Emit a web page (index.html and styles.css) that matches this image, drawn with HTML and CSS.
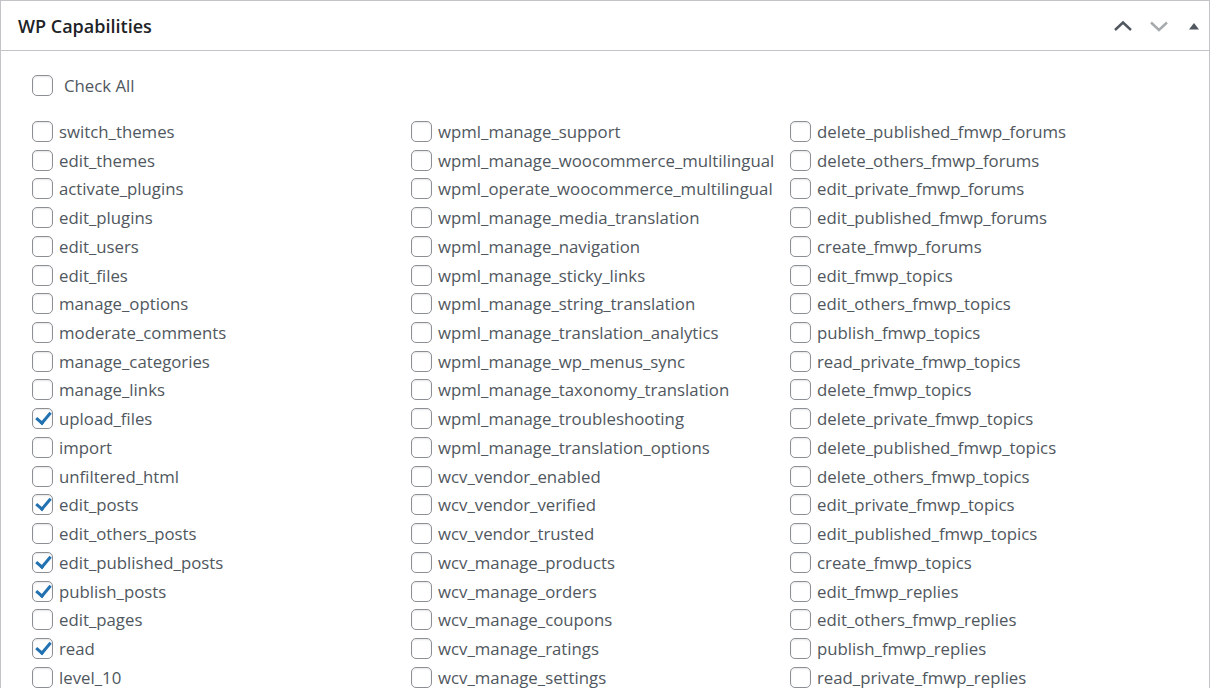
FILE: index.html
```html
<!DOCTYPE html>
<html lang="en">
<head>
<meta charset="utf-8">
<title>WP Capabilities</title>
<link rel="stylesheet" href="styles.css">
</head>
<body>
<div class="postbox">
  <div class="postbox-header">
    <h2 class="hndle">WP Capabilities</h2>
    <div class="handle-actions">
      <button class="handle-btn" type="button" aria-label="Move up">
        <svg width="20" height="20" viewBox="0 0 20 20"><path d="M2 14 L10 6.5 L18 14" fill="none" stroke="#50575e" stroke-width="2.4"/></svg>
      </button>
      <button class="handle-btn" type="button" aria-label="Move down">
        <svg width="20" height="20" viewBox="0 0 20 20"><path d="M2 6.5 L10 14 L18 6.5" fill="none" stroke="#a7aaad" stroke-width="2.4"/></svg>
      </button>
      <button class="handle-btn toggle" type="button" aria-label="Toggle panel">
        <svg width="12" height="10" viewBox="0 0 12 10"><path d="M1 8.5 L6 2 L11 8.5 Z" fill="#50575e"/></svg>
      </button>
    </div>
  </div>
  <div class="inside">
    <label class="check-all"><span class="cb"></span><span class="lbl">Check All</span></label>
    <div class="caps" id="caps"></div>
  </div>
</div>
<script src="app.js"></script>
</body>
</html>
```
FILE: app.js
```js
// Capability lists, one per column, with their checked state.
const columns = [
  [
    ["switch_themes", 0], ["edit_themes", 0], ["activate_plugins", 0], ["edit_plugins", 0],
    ["edit_users", 0], ["edit_files", 0], ["manage_options", 0], ["moderate_comments", 0],
    ["manage_categories", 0], ["manage_links", 0], ["upload_files", 1], ["import", 0],
    ["unfiltered_html", 0], ["edit_posts", 1], ["edit_others_posts", 0], ["edit_published_posts", 1],
    ["publish_posts", 1], ["edit_pages", 0], ["read", 1], ["level_10", 0]
  ],
  [
    ["wpml_manage_support", 0], ["wpml_manage_woocommerce_multilingual", 0],
    ["wpml_operate_woocommerce_multilingual", 0], ["wpml_manage_media_translation", 0],
    ["wpml_manage_navigation", 0], ["wpml_manage_sticky_links", 0],
    ["wpml_manage_string_translation", 0], ["wpml_manage_translation_analytics", 0],
    ["wpml_manage_wp_menus_sync", 0], ["wpml_manage_taxonomy_translation", 0],
    ["wpml_manage_troubleshooting", 0], ["wpml_manage_translation_options", 0],
    ["wcv_vendor_enabled", 0], ["wcv_vendor_verified", 0], ["wcv_vendor_trusted", 0],
    ["wcv_manage_products", 0], ["wcv_manage_orders", 0], ["wcv_manage_coupons", 0],
    ["wcv_manage_ratings", 0], ["wcv_manage_settings", 0]
  ],
  [
    ["delete_published_fmwp_forums", 0], ["delete_others_fmwp_forums", 0],
    ["edit_private_fmwp_forums", 0], ["edit_published_fmwp_forums", 0],
    ["create_fmwp_forums", 0], ["edit_fmwp_topics", 0], ["edit_others_fmwp_topics", 0],
    ["publish_fmwp_topics", 0], ["read_private_fmwp_topics", 0], ["delete_fmwp_topics", 0],
    ["delete_private_fmwp_topics", 0], ["delete_published_fmwp_topics", 0],
    ["delete_others_fmwp_topics", 0], ["edit_private_fmwp_topics", 0],
    ["edit_published_fmwp_topics", 0], ["create_fmwp_topics", 0], ["edit_fmwp_replies", 0],
    ["edit_others_fmwp_replies", 0], ["publish_fmwp_replies", 0], ["read_private_fmwp_replies", 0]
  ]
];

const caps = document.getElementById("caps");
for (const col of columns) {
  const ul = document.createElement("ul");
  ul.className = "cap-col";
  for (const [name, on] of col) {
    const li = document.createElement("li");
    li.className = "cap";
    const cb = document.createElement("span");
    cb.className = on ? "cb checked" : "cb";
    const lbl = document.createElement("span");
    lbl.className = "lbl";
    lbl.textContent = name;
    li.append(cb, lbl);
    ul.append(li);
  }
  caps.append(ul);
}
```
FILE: styles.css
```css
html, body {
  margin: 0;
  padding: 0;
  background: #fff;
  overflow: hidden;
  height: 688px;
}

body {
  font-family: "Open Sans", "Noto Sans", sans-serif;
  color: #50575e;
}

.postbox {
  width: 1208px;
  border: 1px solid #c3c4c7;
  background: #fff;
}

.postbox-header {
  height: 49px;
  display: flex;
  align-items: center;
  justify-content: space-between;
  border-bottom: 1px solid #c3c4c7;
}

.hndle {
  margin: 0 0 0 17px;
  font-size: 18px;
  font-weight: 600;
  color: #1d2327;
}

.handle-actions {
  display: flex;
  align-items: center;
  margin-right: -2px;
}

.handle-btn {
  width: 36px;
  height: 36px;
  border: 0;
  padding: 0;
  background: none;
  display: flex;
  align-items: center;
  justify-content: center;
}

.handle-btn.toggle {
  width: 34px;
}

.inside {
  padding: 23px 0 0 31px;
}

.check-all {
  display: flex;
  align-items: center;
  height: 22px;
  margin-bottom: 21px;
}

.check-all .lbl {
  margin-left: 11px;
  font-size: 16.8px;
}

.caps {
  display: flex;
}

.cap-col {
  list-style: none;
  margin: 0;
  padding: 0;
  width: 379px;
}

.cap {
  display: flex;
  align-items: center;
  height: 28.74px;
}

.cap .lbl {
  margin-left: 6px;
  font-size: 16.8px;
  white-space: nowrap;
}

.cb {
  flex: none;
  box-sizing: border-box;
  width: 21px;
  height: 21px;
  border: 1px solid #8c8f94;
  border-radius: 5px;
  background: #fff;
  box-shadow: inset 0 1px 2px rgba(0, 0, 0, 0.1);
  position: relative;
}

.cb.checked::after {
  content: "";
  position: absolute;
  left: 6px;
  top: 0;
  width: 6px;
  height: 12px;
  border: solid #2271b1;
  border-width: 0 3.5px 3.5px 0;
  transform: rotate(40deg);
}
```
